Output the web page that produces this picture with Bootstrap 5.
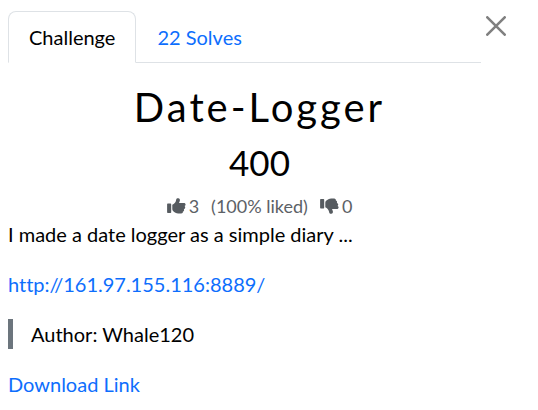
<!DOCTYPE html>
<html lang="en">
<head>
<meta charset="utf-8">
<meta name="viewport" content="width=device-width, initial-scale=1">
<title>Date-Logger</title>
<link href="https://cdn.jsdelivr.net/npm/bootstrap@5.3.0/dist/css/bootstrap.min.css" rel="stylesheet">
<style>
body { font-family: Lato, "Liberation Sans", sans-serif; font-size: 20px; line-height: 30px; color: #000; font-variant-ligatures: none; }
.challenge { padding: 11px 27px 11px 8px; }
.challenge .nav-tabs { --bs-nav-link-padding-x: 20px; --bs-nav-link-padding-y: 10px; --bs-nav-tabs-border-radius: 8px; --bs-nav-tabs-link-active-color: #000; --bs-nav-link-color: #0d6efd; }
.close-button { width: 30px; height: 30px; color: #808080; }
.challenge-title { font-size: 40px; line-height: 48px; letter-spacing: 3px; margin: 20px 0 10px; }
.challenge-value { font-size: 35px; line-height: 42px; margin-bottom: 10px; }
.votes { font-size: 18px; line-height: 26px; color: #5c6166; }
.vote { color: inherit; font-size: inherit; line-height: inherit; gap: 3px; }
.vote svg { color: #565b60; }
.description p, .description blockquote { font-size: 20px; margin-bottom: 20px; }
.description blockquote { border-left: 5px solid #6c757d; padding-left: 18px; }
.description a { color: #0d6efd; }
</style>
</head>
<body>
<main class="challenge">
  <div class="d-flex align-items-start">
    <ul class="nav nav-tabs flex-grow-1" role="tablist">
      <li class="nav-item" role="presentation"><button class="nav-link active" type="button" role="tab" aria-selected="true">Challenge</button></li>
      <li class="nav-item" role="presentation"><button class="nav-link" type="button" role="tab" aria-selected="false">22 Solves</button></li>
    </ul>
    <button class="close-button btn border-0 p-0 d-flex align-items-center justify-content-center" type="button" aria-label="Close">
      <svg width="20" height="20" viewBox="0 0 20 20" fill="none" stroke="currentColor" stroke-width="2.6" stroke-linecap="round" aria-hidden="true"><path d="M1.300 1.300 18.700 18.700M18.700 1.300 1.300 18.700"/></svg>
    </button>
  </div>
  <div class="text-center">
    <h2 class="challenge-title fw-normal">Date-Logger</h2>
    <h3 class="challenge-value fw-normal">400</h3>
    <div class="votes d-flex justify-content-center">
      <button class="vote btn border-0 p-0 d-flex align-items-center" type="button" aria-label="Like, 3">
        <svg width="19" height="16" viewBox="0 0 19 16" fill="currentColor" aria-hidden="true"><path d="M.8 5.500h2.700q.7 0 .7.700v8.100q0 .7-.7.700H.8q-.7 0-.7-.7V6.200q0-.7.700-.7zM5.300 6.700c1.900-.8 3.300-2.300 3.700-4.300l.2-.8C9.400.5 10.300 0 11.300.200c1.200.2 1.800 1.300 1.600 2.400-.2.900-.5 1.700-.9 2.500h4.900c1 0 1.700.7 1.700 1.500 0 .7-.4 1.300-1.100 1.500.5.300.7.800.7 1.300 0 .9-.6 1.500-1.400 1.600.2.300.3.600.3.900 0 .8-.5 1.400-1.200 1.600.2 1-.6 2-1.700 2h-3c-1 0-2-.3-2.800-.8l-1.600-1c-.9-.6-1.500-1.500-1.500-2.600z"/></svg>
        <span>3</span>
      </button>
      <span class="mx-2 px-1">(100% liked)</span>
      <button class="vote btn border-0 p-0 d-flex align-items-center" type="button" aria-label="Dislike, 0">
        <svg width="19" height="16" viewBox="0 0 19 16" fill="currentColor" aria-hidden="true"><path d="M.8 1h2.700q.7 0 .7.700v8.100q0 .7-.7.700H.8q-.7 0-.7-.7V1.700Q.1 1 .8 1zM5.300 9.300c1.900.8 3.300 2.300 3.700 4.300l.2.800c.2 1.100 1.100 1.600 2.100 1.400 1.200-.2 1.800-1.300 1.600-2.400-.2-.9-.5-1.700-.9-2.500h4.900c1 0 1.700-.7 1.700-1.500 0-.7-.4-1.300-1.100-1.500.5-.3.700-.8.700-1.300 0-.9-.6-1.500-1.400-1.600.2-.3.300-.6.300-.9 0-.8-.5-1.400-1.200-1.600.2-1-.6-2-1.700-2h-3c-1 0-2 .3-2.800.8l-1.600 1c-.9.600-1.500 1.500-1.500 2.600z"/></svg>
        <span>0</span>
      </button>
    </div>
  </div>
  <div class="description">
    <p>I made a date logger as a simple diary ...</p>
    <p><a class="text-decoration-none" href="http://161.97.155.116:8889/">http://161.97.155.116:8889/</a></p>
    <blockquote>Author: Whale120</blockquote>
    <a class="text-decoration-none" href="#">Download Link</a>
  </div>
</main>
<script src="https://cdn.jsdelivr.net/npm/bootstrap@5.3.0/dist/js/bootstrap.bundle.min.js"></script>
</body>
</html>
